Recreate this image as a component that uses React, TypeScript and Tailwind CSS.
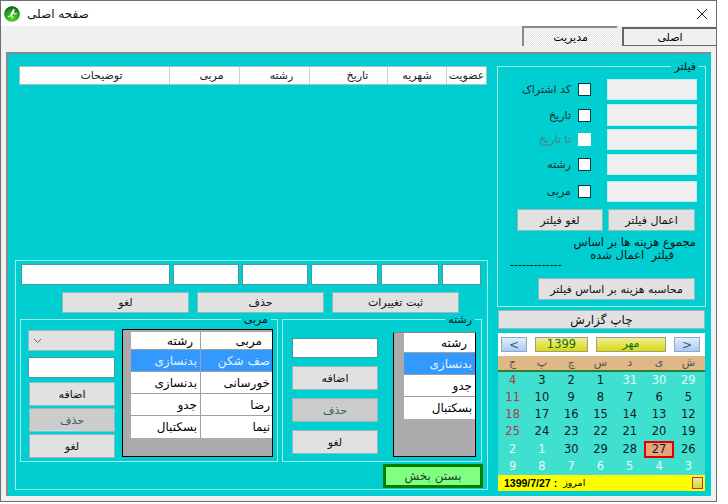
import { ReactNode } from "react";

const Btn = ({ className, off, children }: { className: string; off?: boolean; children: ReactNode }) => (
  <div
    className={`flex items-center justify-center border border-[#8fbcbc] text-[11px] leading-none ${
      off ? "bg-[#cccccc] text-[#33605f]" : "bg-[#e1e1e1] text-[#111111]"
    } ${className}`}
  >
    {children}
  </div>
);

const Group = ({ title, titleClass, className, children }: { title: string; titleClass: string; className: string; children: ReactNode }) => (
  <div className={`relative border border-[#a5eeee] ${className}`}>
    <span className={`absolute -top-[7px] bg-[#00ced1] px-[3px] text-[11px] leading-[14px] text-[#111111] ${titleClass}`}>{title}</span>
    {children}
  </div>
);

const FilterRow = ({ label, mt, h, off }: { label: string; mt: string; h: string; off?: boolean }) => (
  <div className={`flex items-center justify-end ${mt}`}>
    <span className={`text-[11px] leading-none ${off ? "text-[#4f7f80]" : "text-[#1c2b2b]"}`}>{label}</span>
    <div className={`ml-[7px] h-[13px] w-[13px] bg-white ${off ? "" : "border border-[#0b3b3d]"}`} />
    <div className={`ml-[16px] w-[90px] border border-[#bdeeee] bg-[#f0f0f0] ${h}`} />
  </div>
);

const weeks = [
  [4, 3, 2, 1, 31, 30, 29],
  [11, 10, 9, 8, 7, 6, 5],
  [18, 17, 16, 15, 14, 13, 12],
  [25, 24, 23, 22, 21, 20, 19],
  [2, 1, 30, 29, 28, 27, 26],
  [9, 8, 7, 6, 5, 4, 3],
];
const dayNames = ["ج", "پ", "چ", "س", "د", "ی", "ش"];

const isOther = (r: number, c: number) => (r === 0 && c >= 4) || (r === 4 && c <= 1) || r === 5;

const Calendar = () => (
  <div className="ml-px mt-[4px] w-[207px]">
    <div className="flex h-[23px] items-start bg-white pt-[4px] pl-[3px]">
      <div className="flex h-[15px] w-[26px] items-center justify-center border border-[#8fa8c0] bg-linear-to-b from-[#e3eefc] to-[#a9c9f5] text-[12px] text-[#33606a]">&lt;</div>
      <div className="ml-[8px] flex h-[15px] w-[53px] items-center justify-center border border-[#9aa080] bg-linear-to-b from-[#ecec9e] via-[#e4e44a] to-[#d8d800] text-[11.5px] text-[#157015]">1399</div>
      <div className="ml-[8px] flex h-[15px] w-[70px] items-center justify-center border border-[#9aa080] bg-linear-to-b from-[#ecec9e] via-[#e4e44a] to-[#d8d800] text-[11px] text-[#157015]">مهر</div>
      <div className="ml-[8px] flex h-[15px] w-[26px] items-center justify-center border border-[#8fa8c0] bg-linear-to-b from-[#e3eefc] to-[#a9c9f5] text-[12px] text-[#33606a]">&gt;</div>
    </div>
    <div className="h-[16px] border-b-2 border-[#2e7d32] bg-[#deb887] pr-[2px]">
      <div className="grid grid-cols-7">
        {dayNames.map((d, i) => (
          <span key={i} className="text-center text-[11px] leading-[14px] text-[#555555]">{d}</span>
        ))}
      </div>
    </div>
    <div className="h-[103px] bg-[#40e0d0] pr-[2px]">
      <div className="grid h-[103px] grid-cols-7 grid-rows-6 text-[11.5px]">
        {weeks.map((w, r) =>
          w.map((n, c) => {
            const today = r === 4 && c === 5;
            const color = isOther(r, c) ? "text-[#e4fbf8]" : c === 0 ? "text-[#b03a48]" : "text-[#102020]";
            return (
              <div key={`${r}-${c}`} className={`flex items-center justify-center ${color} ${today ? "border-2 border-[#e00000] bg-[#e8a27c]" : ""}`}>
                {n}
              </div>
            );
          })
        )}
      </div>
    </div>
    <div className="flex h-[16px] items-center justify-between bg-[#ffff00] pl-[6px] pr-[2px]">
      <span className="flex items-center gap-[6px] font-['Liberation_Sans',sans-serif] text-[10.5px] font-bold leading-none text-black">
        <span>1399/7/27 :</span>
        <span className="font-['DejaVu_Sans',sans-serif] text-[9.5px] font-normal">امروز</span>
      </span>
      <div className="h-[12px] w-[11px] border border-[#c03020] bg-linear-to-b from-[#e8e8a0] to-[#d8d820]" />
    </div>
  </div>
);

const Row2 = ({ a, b, sel, last, h, first }: { a: string; b: string; sel?: boolean; last?: boolean; h: string; first?: boolean }) => (
  <div className={`flex text-[12px] ${h} ${sel ? "bg-[#3399ff] text-[#e8f3ff]" : "bg-white text-black"} ${last ? "" : "border-b border-[#a0a0a0]"}`}>
    <div className={`flex w-[70px] items-center justify-end border-r border-[#a0a0a0] ${first ? "pr-[7px]" : "pr-[3px]"}`}>{a}</div>
    <div className={`flex w-[70px] items-center justify-end ${first ? "pr-[9px]" : "pr-[1px]"}`}>{b}</div>
  </div>
);

const Row1 = ({ a, sel, last, h, first }: { a: string; sel?: boolean; last?: boolean; h: string; first?: boolean }) => (
  <div className={`flex items-center justify-end text-[12px] ${h} ${first ? "pr-[8px]" : "pr-[3px]"} ${sel ? "bg-[#3399ff] text-[#e8f3ff]" : "bg-white text-black"} ${last ? "" : "border-b border-[#a0a0a0]"}`}>
    {a}
  </div>
);

const headCols = [
  { t: "توضیحات", w: "w-[150px] pl-[14px]" },
  { t: "مربی", w: "w-[70px] pl-[14px]" },
  { t: "رشته", w: "w-[70px] pl-[14px]" },
  { t: "تاریخ", w: "w-[78px] pl-[18px]" },
  { t: "شهریه", w: "w-[59px]" },
  { t: "عضویت", w: "w-[39px]" },
];

const App = () => {
  return (
    <div className="h-[504px] w-[728px] overflow-hidden bg-white font-['DejaVu_Sans',sans-serif]">
      <div className="flex h-[502px] w-[717px] flex-col border border-[#6e6e6e] bg-[#f0f0f0]">
        {/* title bar */}
        <div className="flex h-[25px] shrink-0 items-center bg-white pl-[3px] pr-[8px]">
          <svg width="16" height="16" viewBox="0 0 16 16">
            <defs>
              <radialGradient id="ball" cx="0.5" cy="0.75" r="0.8">
                <stop offset="0" stopColor="#5fe02a" />
                <stop offset="0.6" stopColor="#1f9a1a" />
                <stop offset="1" stopColor="#0b4a12" />
              </radialGradient>
            </defs>
            <circle cx="8" cy="8" r="7.8" fill="url(#ball)" />
            <path d="M9.5 2.8l1.2.6-.8 3 1.6 1.2 1.7-.4-.1.9-2.2.5-1.6-1-1.2 2 1.2 1.6-.8.5-1.6-1.9L5 11.2l-1.5-.4 2.5-1.2 1.4-3.4z" fill="#ffffff" />
          </svg>
          <span className="ml-[7px] text-[12px] leading-none text-[#111111]">صفحه اصلی</span>
          <svg className="ml-auto" width="12" height="12" viewBox="0 0 12 12">
            <path d="M1 1l10 10M11 1L1 11" stroke="#222222" strokeWidth="1" fill="none" />
          </svg>
        </div>
        {/* tabs */}
        <div className="flex h-[26px] shrink-0 items-start justify-end">
          <div className="mr-[5px] flex h-[20px] w-[95px] items-center justify-center border-l-2 border-t-2 border-[#8a8a8a] bg-[image:repeating-conic-gradient(#e2e2e2_0_25%,#ffffff_0_50%)] bg-[length:2px_2px] text-[11px] leading-none text-black">
            مدیریت
          </div>
          <div className="mt-px flex h-[19px] w-[94px] items-center justify-center border-b border-l-2 border-t-2 border-[#666666] bg-[#f0f0f0] text-[11px] leading-none text-black">
            اصلی
          </div>
        </div>
        {/* teal page */}
        <div className="ml-[5px] flex h-[444px] w-[705px] shrink-0 items-start border-l-2 border-t-2 border-[#7f8f8f] bg-[#00ced1] pl-[7px] pt-[12px]">
          <div className="w-[473px]">
            <div className="ml-[4px] flex h-[19px] w-[468px] border border-[#9fc4c4] bg-white">
              {headCols.map((c) => (
                <div key={c.t} className={`flex items-center justify-center border-r border-[#d0d0d0] text-[11px] leading-none text-[#222222] last:border-r-0 ${c.w}`}>
                  {c.t}
                </div>
              ))}
            </div>
            <div className="mt-[175px] h-[230px] w-[473px] border border-[#a5eeee]">
              <div className="ml-[5px] mt-[3px] flex gap-[3px]">
                <div className="h-[21px] w-[149px] border border-[#4a9a9c] bg-white" />
                <div className="h-[21px] w-[66px] border border-[#4a9a9c] bg-white" />
                <div className="h-[21px] w-[66px] border border-[#4a9a9c] bg-white" />
                <div className="h-[21px] w-[67px] border border-[#4a9a9c] bg-white" />
                <div className="h-[21px] w-[58px] border border-[#4a9a9c] bg-white" />
                <div className="h-[21px] w-[39px] border border-[#4a9a9c] bg-white" />
              </div>
              <div className="ml-[46px] mt-[7px] flex gap-[8px]">
                <Btn className="h-[21px] w-[127px]">لغو</Btn>
                <Btn className="h-[21px] w-[127px]">حذف</Btn>
                <Btn className="h-[21px] w-[127px]">ثبت تغییرات</Btn>
              </div>
              <div className="ml-[4px] mt-[6px] flex gap-[4px]">
                <Group title="مربی" titleClass="right-[6px]" className="flex h-[143px] w-[258px] items-start pl-[7px] pt-[9px]">
                  <div className="mt-px w-[87px]">
                    <div className="flex h-[21px] items-center border border-[#8fbcbc] bg-[#e1e1e1] pl-[4px]">
                      <svg width="9" height="6" viewBox="0 0 9 6">
                        <path d="M1 1l3.5 3.5L8 1" stroke="#666666" fill="none" />
                      </svg>
                    </div>
                    <div className="mt-[6px] h-[21px] border border-[#4a9a9c] bg-white" />
                    <Btn className="ml-px mt-[4px] h-[24px] w-[86px]">اضافه</Btn>
                    <Btn off className="relative ml-px mt-[2px] h-[24px] w-[86px]">
                      حذف
                      <span className="absolute bottom-0 left-[7px] h-px w-[41px] bg-[#a5eeee]" />
                    </Btn>
                    <Btn className="ml-px mt-[2px] h-[24px] w-[86px]">لغو</Btn>
                  </div>
                  <div className="ml-[7px] h-[128px] w-[151px] border border-black bg-[#ababab] pl-[8px] pt-[2px]">
                    <Row2 first a="رشته" b="مربی" h="h-[18px]" />
                    <Row2 sel a="بدنسازی" b="صف شکن" h="h-[22px]" />
                    <Row2 a="بدنسازی" b="خورسانی" h="h-[22px]" />
                    <Row2 a="جدو" b="رضا" h="h-[22px]" />
                    <Row2 last a="بسکتبال" b="نیما" h="h-[22px]" />
                  </div>
                </Group>
                <Group title="رشته" titleClass="right-[6px]" className="flex h-[143px] w-[200px] items-start pl-[9px]">
                  <div className="mt-[18px] w-[86px]">
                    <div className="h-[20px] border border-[#4a9a9c] bg-white" />
                    <Btn className="mt-[8px] h-[24px] w-[86px]">اضافه</Btn>
                    <Btn off className="mt-[8px] h-[24px] w-[86px]">حذف</Btn>
                    <Btn className="mt-[8px] h-[24px] w-[86px]">لغو</Btn>
                  </div>
                  <div className="ml-[15px] mt-[12px] h-[125px] w-[83px] border border-black border-t-[#8a8a8a] bg-[#ababab] pl-[10px]">
                    <Row1 first a="رشته" h="h-[20px]" />
                    <Row1 sel a="بدنسازی" h="h-[22px]" />
                    <Row1 a="جدو" h="h-[22px]" />
                    <Row1 last a="بسکتبال" h="h-[22px]" />
                  </div>
                </Group>
              </div>
              <div className="ml-[367px] mt-[2px] flex h-[24px] w-[100px] items-center justify-center border-[3px] border-[#008000] bg-[#80ff80] text-[12px] leading-none text-[#224422]">
                بستن بخش
              </div>
            </div>
          </div>
          <div className="ml-[9px] w-[209px]">
            <Group title="فیلتر" titleClass="right-[6px]" className="h-[241px] w-[209px] pr-[8px] pt-[12px]">
              <FilterRow label="کد اشتراک" mt="" h="h-[21px]" />
              <FilterRow label="تاریخ" mt="mt-[4px]" h="h-[22px]" />
              <FilterRow off label="تا تاریخ" mt="mt-[3px]" h="h-[21px]" />
              <FilterRow label="رشته" mt="mt-[4px]" h="h-[21px]" />
              <FilterRow label="مربی" mt="mt-[6px]" h="h-[21px]" />
              <div className="ml-[19px] mt-[7px] flex gap-[5px]">
                <Btn className="h-[22px] w-[86px]">لغو فیلتر</Btn>
                <Btn className="h-[22px] w-[87px]">اعمال فیلتر</Btn>
              </div>
              <p dir="rtl" className="mt-[5px] pr-[1px] text-[11.5px] leading-[13px] text-[#111111]">مجموع هزینه ها بر اساس</p>
              <p dir="rtl" className="whitespace-pre pr-[23px] text-[11.5px] leading-[13px] text-[#111111]">فیلتر  اعمال شده</p>
              <p className="ml-[12px] mt-[-4px] text-[11px] leading-[13px] text-black">-------------</p>
              <Btn className="ml-[40px] mt-[7px] h-[22px] w-[157px]">محاسبه هزینه بر اساس فیلتر</Btn>
            </Group>
            <Btn className="ml-px mt-[3px] h-[19px] w-[207px] text-[12px]">چاپ گزارش</Btn>
            <Calendar />
          </div>
        </div>
      </div>
    </div>
  );
};

export default App;
